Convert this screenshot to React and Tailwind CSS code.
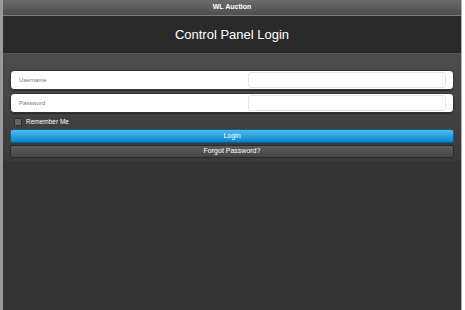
export default function App() {
  return (
    <div className="flex h-[310px] w-[465px] bg-white font-['Liberation_Sans',Arial,sans-serif]">
      <div className="w-[3px] bg-[#9a9a9a]" />
      <div className="flex w-[458px] flex-col bg-[#343434]">
        <div className="flex h-[16px] items-center justify-center border-b border-[#7a7a7a] bg-gradient-to-b from-[#6a6a6a] to-[#4e4e4e] text-[7px] font-bold text-white">
          WL Auction
        </div>
        <div className="flex h-[38px] items-center justify-center border-b border-[#555] bg-[#2a2a2a] text-[13px] text-white">
          Control Panel Login
        </div>
        <div className="flex flex-col bg-gradient-to-b from-[#4c4c4c] to-[#3a3a3a] px-[7px] pb-[3px] pt-[16px]">
          <div className="flex h-[20px] items-center justify-between rounded-[4px] border border-[#333] bg-white pl-[8px] pr-[7px] shadow-[0_1px_1px_rgba(0,0,0,0.4)]">
            <span className="text-[6px] text-[#777]">Username</span>
            <div className="h-[16px] w-[198px] rounded-[3px] border border-[#e4e4e4] bg-white" />
          </div>
          <div className="mt-[3px] flex h-[20px] items-center justify-between rounded-[4px] border border-[#333] bg-white pl-[8px] pr-[7px] shadow-[0_1px_1px_rgba(0,0,0,0.4)]">
            <span className="text-[6px] text-[#777]">Password</span>
            <div className="h-[16px] w-[198px] rounded-[3px] border border-[#e4e4e4] bg-white" />
          </div>
          <div className="mt-[4px] flex h-[10px] items-center gap-[4px] pl-[4px]">
            <div className="h-[8px] w-[8px] rounded-[1px] border border-[#2e2e2e] bg-[#666]" />
            <span className="text-[6.5px] text-white">Remember Me</span>
          </div>
          <div className="mt-[2px] flex h-[14px] items-center justify-center rounded-[2px] border border-[#145a8a] bg-gradient-to-b from-[#3fc3f3] to-[#1480c8] text-[7px] text-white">
            Login
          </div>
          <div className="mt-[2px] flex h-[13px] items-center justify-center rounded-[2px] border border-[#2a2a2a] bg-gradient-to-b from-[#5c5c5c] to-[#464646] text-[7px] text-white">
            Forgot Password?
          </div>
        </div>
        <div className="flex-1 bg-[#343434]" />
      </div>
      <div className="w-[1px] bg-[#b0b0b0]" />
      <div className="w-[3px] bg-white" />
    </div>
  );
}
